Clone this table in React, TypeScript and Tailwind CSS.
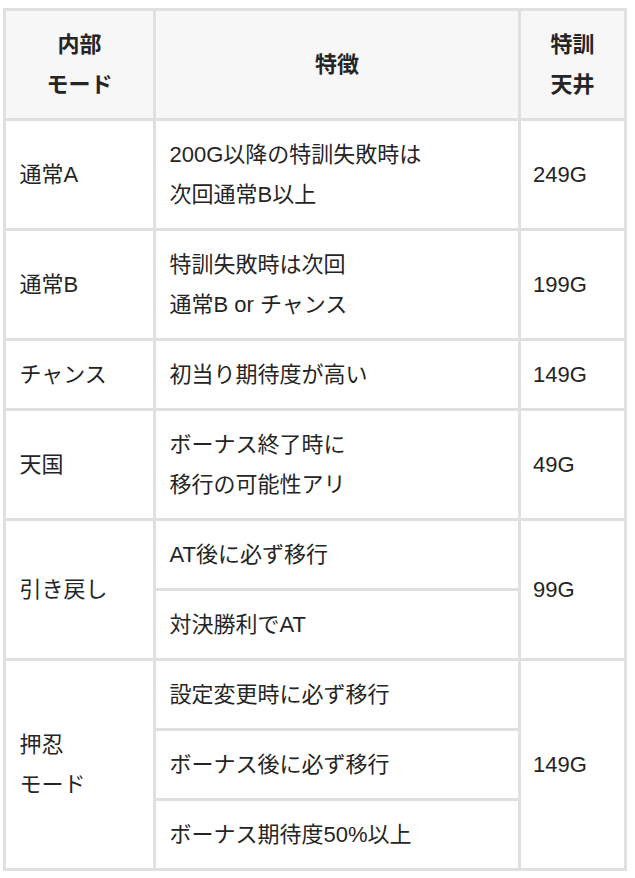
const cell = "border-r-[3px] border-b-[3px] border-[#e0e0e0] px-[13.5px] py-[13.5px] align-middle";
const head = cell + " bg-[#f7f7f7] text-center font-bold";

type Row = {
   mode: string[];
   notes: string[][];
   ceiling: string;
};

const rows: Row[] = [
   { mode: ["通常A"], notes: [["200G以降の特訓失敗時は", "次回通常B以上"]], ceiling: "249G" },
   { mode: ["通常B"], notes: [["特訓失敗時は次回", "通常B or チャンス"]], ceiling: "199G" },
   { mode: ["チャンス"], notes: [["初当り期待度が高い"]], ceiling: "149G" },
   { mode: ["天国"], notes: [["ボーナス終了時に", "移行の可能性アリ"]], ceiling: "49G" },
   { mode: ["引き戻し"], notes: [["AT後に必ず移行"], ["対決勝利でAT"]], ceiling: "99G" },
   {
      mode: ["押忍", "モード"],
      notes: [["設定変更時に必ず移行"], ["ボーナス後に必ず移行"], ["ボーナス期待度50%以上"]],
      ceiling: "149G",
   },
];

function Lines({ lines }: { lines: string[] }) {
   return (
      <>
         {lines.map((l, i) => (
            <span key={i} className="block">
               {l}
            </span>
         ))}
      </>
   );
}

export default function App() {
   return (
      <div
         className="min-h-[878px] bg-white pl-[3px] pt-[8px] text-[22px] leading-[40px] text-[#252525]"
         style={{ fontFamily: '"Liberation Sans", "Noto Sans CJK JP", sans-serif' }}
      >
         <table className="w-[624px] table-fixed border-separate border-spacing-0 border-l-[3px] border-t-[3px] border-[#e0e0e0]">
            <colgroup>
               <col className="w-[150px]" />
               <col className="w-[365px]" />
               <col className="w-[106px]" />
            </colgroup>
            <thead>
               <tr>
                  <th className={head}>
                     <Lines lines={["内部", "モード"]} />
                  </th>
                  <th className={head}>特徴</th>
                  <th className={head}>
                     <Lines lines={["特訓", "天井"]} />
                  </th>
               </tr>
            </thead>
            <tbody>
               {rows.map((r) =>
                  r.notes.map((n, i) => (
                     <tr key={r.mode.join() + i}>
                        {i === 0 && (
                           <td rowSpan={r.notes.length} className={cell}>
                              <Lines lines={r.mode} />
                           </td>
                        )}
                        <td className={cell}>
                           <Lines lines={n} />
                        </td>
                        {i === 0 && (
                           <td rowSpan={r.notes.length} className={cell + " pl-[12px]"}>
                              {r.ceiling}
                           </td>
                        )}
                     </tr>
                  ))
               )}
            </tbody>
         </table>
      </div>
   );
}
